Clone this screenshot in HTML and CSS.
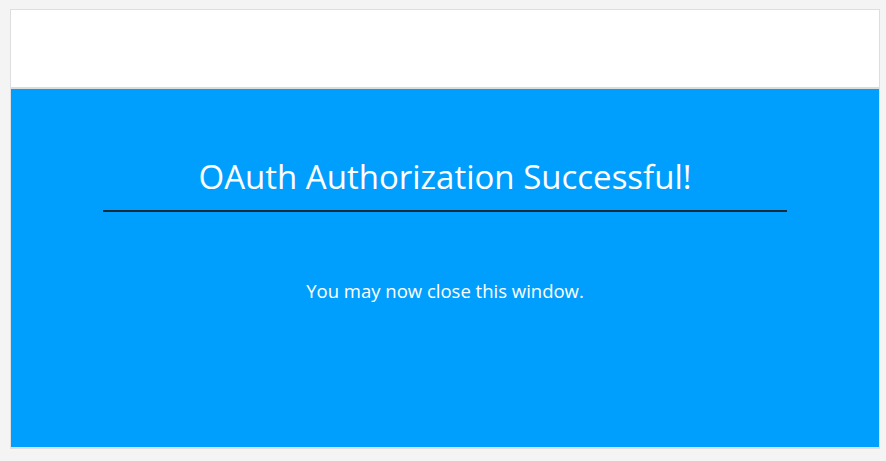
FILE: index.html
```html
<!DOCTYPE html>
<html lang="en">
<head>
<meta charset="utf-8">
<title>OAuth Authorization Successful</title>
<link rel="stylesheet" href="styles.css">
</head>
<body>
  <div class="frame">
    <header class="top"></header>
    <main class="panel">
      <h1 class="title">OAuth Authorization Successful!</h1>
      <p class="message">You may now close this window.</p>
    </main>
  </div>
</body>
</html>
```
FILE: styles.css
```css
html, body {
  margin: 0;
  padding: 0;
}
body {
  background: #f4f4f4;
  padding: 9px 0 0 10px;
  font-family: "Open Sans", "Noto Sans", sans-serif;
}
.frame {
  width: 868px;
  border: 1px solid #dedede;
  border-bottom-width: 2px;
  background: #fff;
}
.top {
  height: 77px;
  border-bottom: 2px solid #dcdcdc;
  background: #fff;
}
.panel {
  height: 358px;
  background: #009ffd;
  color: #fff;
  padding-top: 1px;
  box-sizing: border-box;
}
.title {
  margin: 64px 92px 0 92px;
  padding-bottom: 10px;
  border-bottom: 2px solid #1b2b3a;
  font-size: 33px;
  font-weight: 400;
  text-align: center;
  line-height: 46px;
}
.message {
  margin: 67px 0 0 0;
  font-size: 18.5px;
  text-align: center;
  line-height: 24px;
}
```
